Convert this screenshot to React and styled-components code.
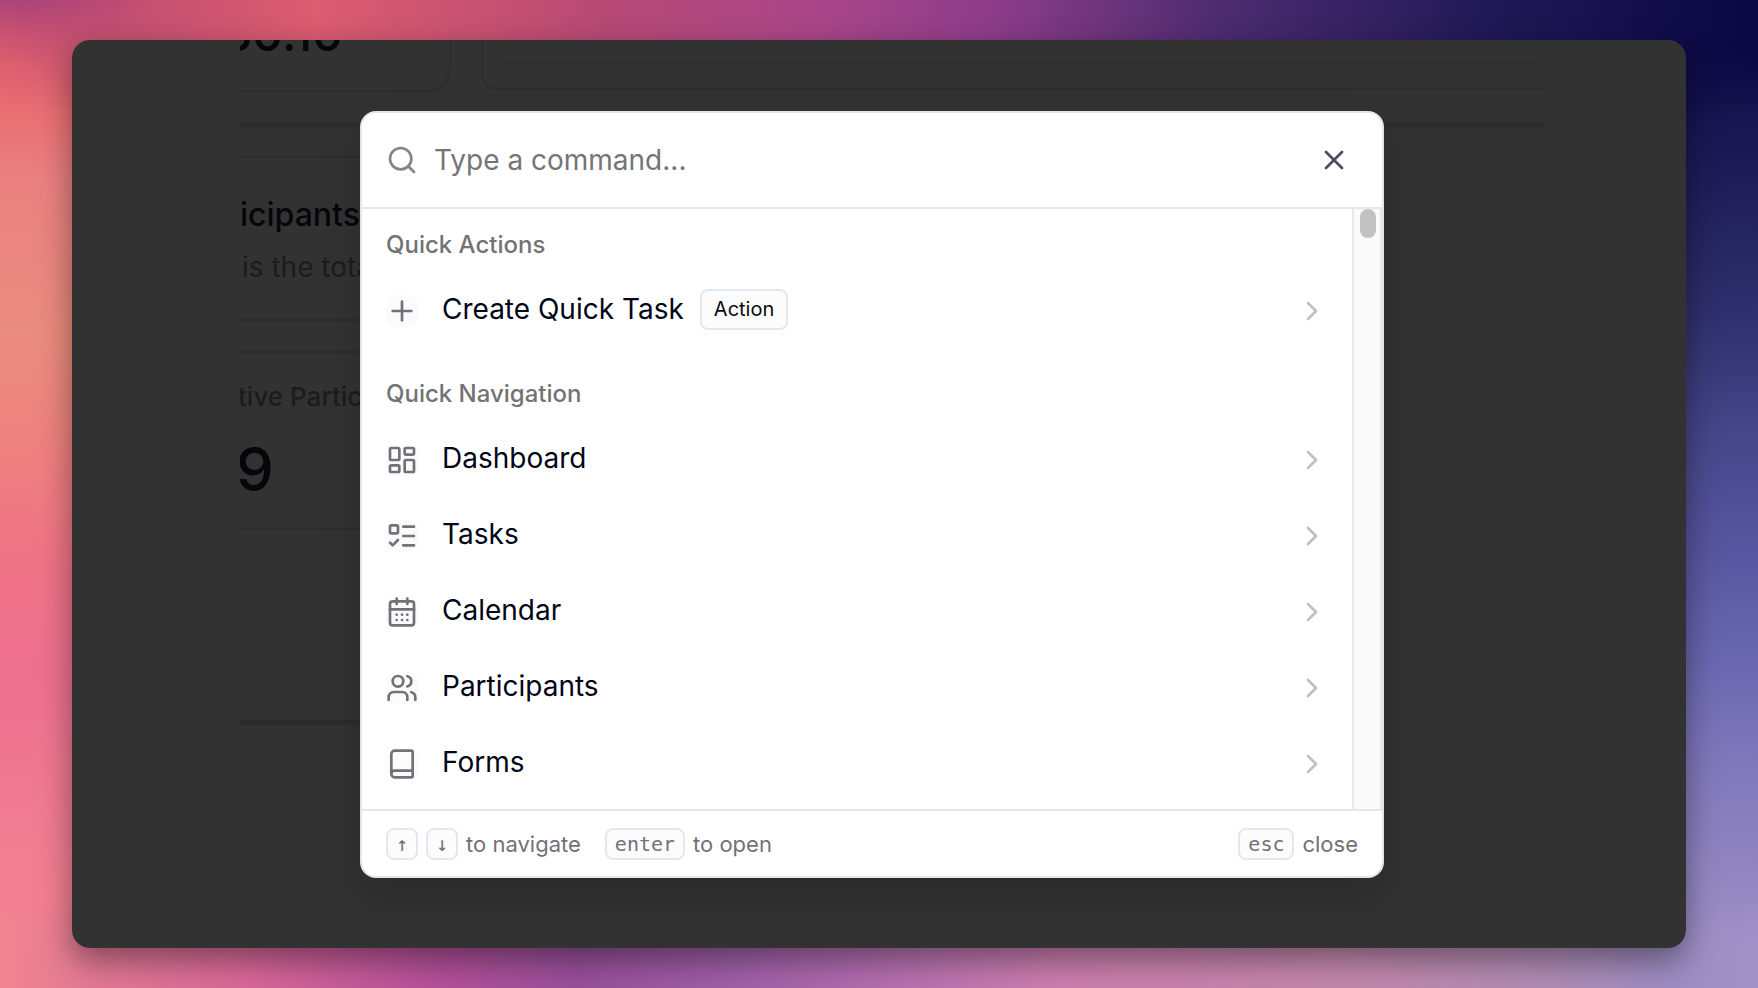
import React from "react";

import styled, { createGlobalStyle } from "styled-components";
import {
  Book,
  CalendarDays,
  ChevronRight,
  LayoutDashboard,
  ListTodo,
  Plus,
  Search,
  Users,
  X,
} from "lucide-react";

const GlobalStyle = createGlobalStyle`
  * {
    box-sizing: border-box;
  }

  body {
    margin: 0;
    font-family: Inter, "Liberation Sans", sans-serif;
  }
`;

const groups = [
  {
    title: "Quick Actions",
    items: [{ label: "Create Quick Task", icon: Plus, badge: "Action" }],
  },
  {
    title: "Quick Navigation",
    items: [
      { label: "Dashboard", icon: LayoutDashboard },
      { label: "Tasks", icon: ListTodo },
      { label: "Calendar", icon: CalendarDays },
      { label: "Participants", icon: Users },
      { label: "Forms", icon: Book },
    ],
  },
];

const Desktop = styled.div`
  position: relative;
  display: flex;
  min-height: 100vh;
  padding: 40px 72px;
  background:
    linear-gradient(
      to bottom,
      #ac4478 0%,
      #d0566f 4%,
      #e0626f 7%,
      #ea7074 12%,
      #ea8080 18%,
      #ea8c7e 34%,
      #ee827e 44%,
      #f07486 56%,
      #ee7090 68%,
      #f07c92 84%,
      #f28490 100%
    ) left / 50% 100% no-repeat,
    linear-gradient(
      to bottom,
      #0b0742 0%,
      #15124c 10%,
      #22225e 22%,
      #30306e 32%,
      #46468a 44%,
      #5856a0 56%,
      #6866ae 66%,
      #7e76ba 76%,
      #9488c2 90%,
      #a392c8 100%
    ) right / 50% 100% no-repeat;
`;

/* colour bands along the top and bottom edges, faded into the sides */
const TopGlow = styled.div`
  position: absolute;
  top: 0;
  left: 0;
  right: 0;
  height: 110px;
  background: linear-gradient(
    to right,
    #ac4478 0%,
    #c04e72 6%,
    #dc5c70 18%,
    #b84a74 34%,
    #aa4688 46%,
    #8f3d8a 56%,
    #4a2b6e 70%,
    #1d1854 86%,
    #0b0742 100%
  );
  mask-image:
    linear-gradient(to right, transparent 0, #000 160px),
    linear-gradient(to bottom, #000 40px, transparent 100%);
  mask-composite: intersect;
`;

const BottomGlow = styled.div`
  position: absolute;
  bottom: 0;
  left: 0;
  right: 0;
  height: 90px;
  background: linear-gradient(
    to right,
    #f28490 0%,
    #e27a94 5%,
    #d96898 14%,
    #b4509a 25%,
    #98509a 33%,
    #a060a8 42%,
    #b872b0 52%,
    #cc7eae 60%,
    #c488ac 76%,
    #b08cb4 88%,
    #9c8cc2 95%,
    #a392c8 100%
  );
  mask-image: linear-gradient(to top, #000 40px, transparent 100%);
`;

const Shade = styled.div`
  position: relative;
  z-index: 1;
  display: flex;
  flex: 1;
  border-radius: 18px;
  box-shadow: 0 12px 32px rgba(0, 0, 0, 0.42);
`;

const Window = styled.main`
  position: relative;
  display: flex;
  flex: 1;
  padding: 0 143px 0 168px;
  overflow: hidden;
  border-radius: 18px;
  background: #323232;
`;

const Report = styled.div`
  flex: 1;
  min-width: 0;
  overflow: hidden;
  color: #05060a;
`;

const Charts = styled.div`
  display: flex;
  gap: 30px;
  height: 82px;
`;

const AmountCard = styled.div`
  width: 211px;
  height: 52px;
  border: solid #2b2c2c;
  border-width: 0 2px 2px 0;
  border-bottom-right-radius: 24px;
`;

const Amount = styled.p`
  margin: -40px 0 0 -18px;
  font-size: 48px;
  font-weight: 500;
  line-height: 68px;
`;

const ChartCard = styled.div`
  flex: 1;
  height: 50px;
  padding-left: 16px;
  border: solid #2b2c2c;
  border-width: 0 0 2px 2px;
  border-bottom-left-radius: 16px;
`;

const ChartAxis = styled.div`
  height: 24px;
  border-bottom: 2px solid #2e2f2f;
`;

const Rule = styled.div`
  height: 6px;
  background: linear-gradient(#2b2d2c 60%, #2f3030);
`;

const Column = styled.div`
  width: 50%;
  padding-bottom: 190px;
`;

const Card = styled.section`
  margin-top: ${(props) => props.$gap}px;
  height: ${(props) => props.$height}px;
  padding-top: ${(props) => props.$top}px;
  border: solid #2b2c2c;
  border-width: 2px 0;
`;

const CardTitle = styled.h2`
  margin: 0 0 12px;
  font-size: 32px;
  font-weight: 500;
  line-height: 40px;
`;

const CardText = styled.p`
  margin: 0 0 0 2px;
  color: #1b1c20;
  font-size: 28px;
  line-height: 40px;
`;

const StatLabel = styled.p`
  margin: 0 0 12px -2px;
  color: #1b1c20;
  font-size: 26px;
  font-weight: 500;
  line-height: 40px;
`;

const StatValue = styled.p`
  margin: 0 0 0 -4px;
  font-size: 60px;
  font-weight: 500;
  line-height: 80px;
`;

const Overlay = styled.div`
  position: absolute;
  inset: 0;
  display: flex;
  align-items: center;
  justify-content: center;
  padding: 1px 14px 0 0;
`;

const Dialog = styled.div`
  display: flex;
  flex-direction: column;
  width: 100%;
  max-width: 1024px;
  overflow: hidden;
  border: 2px solid #e5e5e5;
  border-radius: 16px;
  background: #fff;
  box-shadow: 0 20px 40px rgba(0, 0, 0, 0.15);
`;

const SearchBar = styled.div`
  display: flex;
  align-items: center;
  gap: 16px;
  padding: 30px 32px 30px 24px;
  border-bottom: 2px solid #e2e8f0;
`;

const SearchLabel = styled.label`
  display: flex;
  color: #858585;
`;

const SearchInput = styled.input`
  flex: 1;
  min-width: 0;
  height: 34px;
  padding: 0;
  border: 0;
  outline: 0;
  background: transparent;
  color: #020617;
  font-family: inherit;
  font-size: 28px;

  &::placeholder {
    color: #757575;
  }
`;

const CloseButton = styled.button`
  display: flex;
  padding: 0;
  border: 0;
  background: transparent;
  color: #4b4d5c;
`;

const Body = styled.div`
  display: flex;
  height: 600px;
`;

const List = styled.div`
  flex: 1;
  overflow: hidden;
`;

const Group = styled.section`
  padding-bottom: 9px;
`;

const GroupTitle = styled.h3`
  margin: 0;
  padding: 20px 24px 12px;
  color: #737373;
  font-size: 24px;
  font-weight: 500;
  line-height: 32px;
`;

const Item = styled.button`
  display: flex;
  align-items: center;
  gap: 24px;
  width: 100%;
  height: 76px;
  padding: 0 24px;
  border: 0;
  background: transparent;
  color: #c0c0c4;
  font-family: inherit;
  text-align: left;
`;

const ItemIcon = styled.span`
  display: flex;
  border-radius: 10px;
  background: #fbfbfb;
  color: #71717a;
`;

const ItemLabel = styled.span`
  display: flex;
  flex: 1;
  align-items: center;
  gap: 16px;
  padding-bottom: 4px;
  color: #020617;
  font-size: 28px;
  line-height: 40px;
`;

const Badge = styled.span`
  padding: 4px 12px 5px;
  border: 2px solid #e2e8f0;
  border-radius: 8px;
  background: #fcfcfd;
  color: #0a0a0a;
  font-size: 20px;
  line-height: 28px;
`;

const Scrollbar = styled.div`
  width: 30px;
  padding: 0 4px 0 6px;
  border: solid #e8e8e8;
  border-width: 0 2px;
  background: #fafafa;
`;

const ScrollThumb = styled.div`
  width: 16px;
  height: 29px;
  border-radius: 8px;
  background: #c1c1c1;
`;

const Footer = styled.footer`
  display: flex;
  justify-content: space-between;
  padding: 17px 24px 16px;
  border-top: 2px solid #e2e8f0;
  color: #71717a;
  font-size: 22px;
  line-height: 32px;
`;

const Hints = styled.div`
  display: flex;
  gap: 24px;
`;

const Hint = styled.span`
  display: flex;
  align-items: center;
  gap: 8px;
`;

const Key = styled.kbd`
  height: 32px;
  padding: 0 8px;
  border: 2px solid #e2e8f0;
  border-radius: 8px;
  background: #fcfcfd;
  font-family: "DejaVu Sans Mono", monospace;
  font-size: 20px;
  line-height: 28px;
`;

function CommandItem({ label, icon: Icon, badge }) {
  return (
    <Item type="button">
      <ItemIcon>
        <Icon size={32} />
      </ItemIcon>
      <ItemLabel>
        {label}
        {badge && <Badge>{badge}</Badge>}
      </ItemLabel>
      <ChevronRight size={32} />
    </Item>
  );
}

function Background() {
  return (
    <Report>
      <Charts>
        <AmountCard>
          <Amount>30.10</Amount>
        </AmountCard>
        <ChartCard>
          <ChartAxis />
        </ChartCard>
      </Charts>
      <Rule />
      <Column>
        <Card $gap={28} $height={165} $top={37}>
          <CardTitle>icipants</CardTitle>
          <CardText>is the total</CardText>
        </Card>
        <Card $gap={30} $height={179} $top={24}>
          <StatLabel>tive Partic</StatLabel>
          <StatValue>9</StatValue>
        </Card>
      </Column>
      <Column>
        <Rule />
      </Column>
    </Report>
  );
}

function App() {
  return (
    <>
      <GlobalStyle />
      <Desktop>
        <TopGlow />
        <BottomGlow />
        <Shade>
          <Window>
            <Background />
            <Overlay>
              <Dialog role="dialog" aria-label="Command menu">
                <SearchBar>
                  <SearchLabel htmlFor="command" aria-label="Search">
                    <Search size={32} />
                  </SearchLabel>
                  <SearchInput id="command" placeholder="Type a command..." />
                  <CloseButton type="button" aria-label="Close">
                    <X size={32} />
                  </CloseButton>
                </SearchBar>
                <Body>
                  <List>
                    {groups.map((group) => (
                      <Group key={group.title}>
                        <GroupTitle>{group.title}</GroupTitle>
                        {group.items.map((item) => (
                          <CommandItem key={item.label} {...item} />
                        ))}
                      </Group>
                    ))}
                  </List>
                  <Scrollbar>
                    <ScrollThumb />
                  </Scrollbar>
                </Body>
                <Footer>
                  <Hints>
                    <Hint>
                      <Key>↑</Key>
                      <Key>↓</Key>
                      to navigate
                    </Hint>
                    <Hint>
                      <Key>enter</Key>
                      to open
                    </Hint>
                  </Hints>
                  <Hint>
                    <Key>esc</Key>
                    close
                  </Hint>
                </Footer>
              </Dialog>
            </Overlay>
          </Window>
        </Shade>
      </Desktop>
    </>
  );
}

export default App;
